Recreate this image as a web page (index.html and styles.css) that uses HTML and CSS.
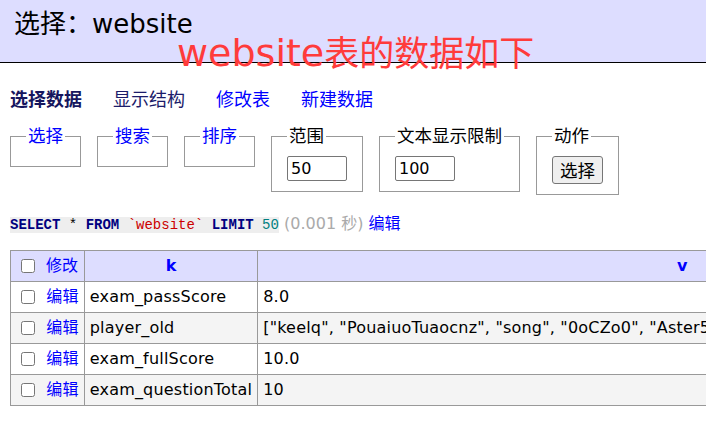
FILE: index.html
```html
<!DOCTYPE html>
<html lang="zh">
<head>
<meta charset="utf-8">
<title>选择: website</title>
<link rel="stylesheet" href="styles.css">
</head>
<body>
<h2 class="page-title">选择：website</h2>
<div class="overlay-note"><span class="latin">website</span>表的数据如下</div>
<div class="content">
  <nav class="links">
    <span class="active">选择数据</span>
    <a href="#" class="visited">显示结构</a>
    <a href="#">修改表</a>
    <a href="#">新建数据</a>
  </nav>
  <form class="filters">
    <fieldset class="box"><legend><a href="#">选择</a></legend></fieldset>
    <fieldset class="box"><legend><a href="#">搜索</a></legend></fieldset>
    <fieldset class="box"><legend><a href="#">排序</a></legend></fieldset>
    <fieldset class="box"><legend>范围</legend><input class="num" type="text" value="50"></fieldset>
    <fieldset class="box"><legend>文本显示限制</legend><input class="num" type="text" value="100"></fieldset>
    <fieldset class="box"><legend>动作</legend><button type="button" class="btn">选择</button></fieldset>
  </form>
  <p class="sql-line"><code class="sql"><b class="kw">SELECT</b> * <b class="kw">FROM</b> <span class="ident">`website`</span> <b class="kw">LIMIT</b> <span class="num-lit">50</span></code> <span class="time">(0.001 秒)</span> <a href="#">编辑</a></p>
  <table class="data">
    <thead>
      <tr>
        <td class="c1"><input type="checkbox" class="cb"> <a href="#">修改</a></td>
        <th><a href="#">k</a></th>
        <th class="vcol"><a href="#">v</a></th>
      </tr>
    </thead>
    <tbody>
      <tr><td class="c1"><input type="checkbox" class="cb"> <a href="#">编辑</a></td><td>exam_passScore</td><td>8.0</td></tr>
      <tr><td class="c1"><input type="checkbox" class="cb"> <a href="#">编辑</a></td><td>player_old</td><td>["keelq", "PouaiuoTuaocnz", "song", "0oCZo0", "Aster5", "mio", "lynn", "Kiyo"]</td></tr>
      <tr><td class="c1"><input type="checkbox" class="cb"> <a href="#">编辑</a></td><td>exam_fullScore</td><td>10.0</td></tr>
      <tr><td class="c1"><input type="checkbox" class="cb"> <a href="#">编辑</a></td><td>exam_questionTotal</td><td>10</td></tr>
    </tbody>
  </table>
</div>
</body>
</html>
```
FILE: styles.css
```css
html, body {
  margin: 0;
  padding: 0;
  background: #fff;
}
body {
  font-family: "DejaVu Sans", "Noto Sans CJK SC", sans-serif;
  font-size: 16px;
  color: #000;
  position: relative;
  width: 706px;
  overflow: hidden;
  height: 424px;
}
a {
  color: #00f;
  text-decoration: none;
}
.page-title {
  margin: 0;
  background: #ddf;
  border-bottom: 1px solid #000;
  font-weight: normal;
  font-size: 26px;
  line-height: 32px;
  padding: 8px 14px 22px;
}
.overlay-note {
  position: absolute;
  left: 177px;
  top: 36px;
  font-size: 35px;
  line-height: 35px;
  color: #ff3b3b;
  font-family: "DejaVu Sans", "Noto Sans CJK SC", sans-serif;
  white-space: nowrap;
}
.overlay-note .latin {
  font-size: 38px;
}
.content {
  padding: 0 0 0 10px;
}
.links {
  display: flex;
  gap: 31px;
  margin-top: 25px;
  font-size: 18px;
  line-height: 24px;
}
.links .active {
  font-weight: bold;
  color: #16165e;
}
.links .visited {
  color: #1c1c6a;
}
.filters {
  display: flex;
  align-items: flex-start;
  gap: 16px;
  margin-top: 12px;
}
.box {
  margin: 0;
  border: 1px solid #999;
  padding: 8px 15px 10px;
  min-width: 0;
}
.box legend {
  padding: 0 2px;
  font-size: 17.5px;
  line-height: 24px;
}
.num {
  width: 60px;
  box-sizing: border-box;
  height: 25px;
  border: 1px solid #767676;
  border-radius: 2px;
  padding: 1px 3px;
  font-family: "DejaVu Sans", sans-serif;
  font-size: 16px;
  display: block;
}
.btn {
  display: block;
  height: 28px;
  box-sizing: border-box;
  padding: 0 7px;
  font-size: 17.5px;
  font-family: "Noto Sans CJK SC", sans-serif;
  line-height: 24px;
  background: #efefef;
  border: 1px solid #767676;
  border-radius: 3px;
  color: #000;
}
.sql-line {
  margin: 19px 0 0;
  line-height: 20px;
  white-space: nowrap;
}
.sql {
  font-family: "Liberation Mono", monospace;
  font-size: 14px;
  background: #eee;
}
.kw {
  color: #000080;
}
.ident {
  color: #c00;
}
.num-lit {
  color: #008080;
}
.time {
  color: #aaa;
}
.data {
  margin-top: 15px;
  border-collapse: collapse;
  white-space: nowrap;
  border: 1px solid #999;
}
.data td, .data th {
  border: 1px solid #999;
  padding: 5px 5px;
  line-height: 20px;
  text-align: left;
}
.data tbody td {
  letter-spacing: 0.2px;
}
.data thead td, .data thead th {
  background: #ddf;
}
.data th {
  text-align: center;
  font-weight: bold;
}
.data .vcol {
  min-width: 838px;
}
.data tbody tr:nth-child(2n) td {
  background: #f4f4f4;
}
.cb {
  width: 14px;
  height: 14px;
  margin: 3px 6px 3px 5px;
  vertical-align: -2px;
}
```
